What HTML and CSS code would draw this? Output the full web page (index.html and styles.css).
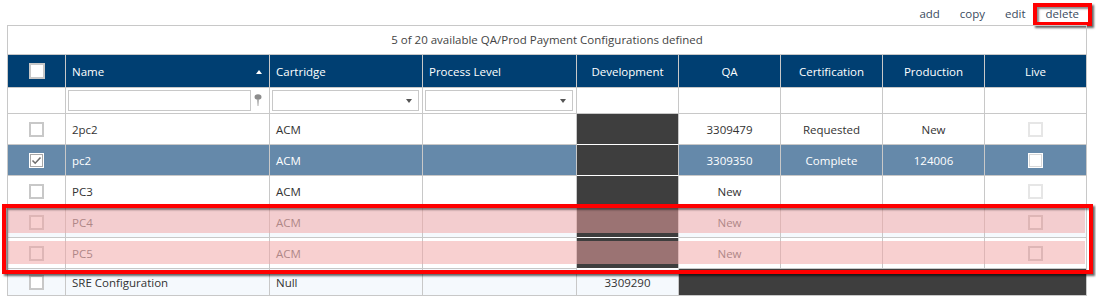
FILE: index.html
```html
<!DOCTYPE html>
<html lang="en">
<head>
    <meta charset="UTF-8">
    <title>Payment Configurations</title>
    <link rel="stylesheet" href="styles.css">
</head>
<body>
    <!-- Toolbar -->
    <div class="toolbar">
        <a class="tool">add</a>
        <a class="tool">copy</a>
        <a class="tool">edit</a>
        <a class="tool tool-marked">delete</a>
    </div>

    <!-- Grid -->
    <div class="grid">
        <div class="grid-title">5 of 20 available QA/Prod Payment Configurations defined</div>
        <table class="grid-table">
            <colgroup>
                <col style="width:58px">
                <col style="width:204px">
                <col style="width:153px">
                <col style="width:154px">
                <col style="width:102px">
                <col style="width:102px">
                <col style="width:102px">
                <col style="width:102px">
                <col style="width:102px">
            </colgroup>
            <thead>
                <tr class="head-row">
                    <th class="center"><span class="cb cb-head"></span></th>
                    <th>Name<span class="sort"></span></th>
                    <th>Cartridge</th>
                    <th>Process Level</th>
                    <th class="center">Development</th>
                    <th class="center">QA</th>
                    <th class="center">Certification</th>
                    <th class="center">Production</th>
                    <th class="center">Live</th>
                </tr>
                <tr class="filter-row">
                    <td></td>
                    <td class="filter-cell">
                        <div class="filter-input"></div>
                        <svg class="pin" width="8" height="13" viewBox="0 0 8 13">
                            <ellipse cx="4" cy="3" rx="3.5" ry="2.8" fill="#8c8c8c"/>
                            <path d="M3.3 5.5 H4.7 L4.3 12 H3.7 Z" fill="#8c8c8c"/>
                        </svg>
                    </td>
                    <td class="filter-cell"><div class="filter-select"></div></td>
                    <td class="filter-cell"><div class="filter-select"></div></td>
                    <td></td><td></td><td></td><td></td><td></td>
                </tr>
            </thead>
            <tbody>
                <tr class="row">
                    <td class="center"><span class="cb"></span></td>
                    <td>2pc2</td>
                    <td>ACM</td>
                    <td></td>
                    <td class="dev"></td>
                    <td class="center">3309479</td>
                    <td class="center">Requested</td>
                    <td class="center">New</td>
                    <td class="center"><span class="cb cb-live"></span></td>
                </tr>
                <tr class="row row-selected">
                    <td class="center"><span class="cb cb-checked">
                        <svg width="11" height="9" viewBox="0 0 11 9"><path d="M1.5 4.5 L4.2 7.2 L9.5 1.5" fill="none" stroke="#6e6e6e" stroke-width="1.6"/></svg>
                    </span></td>
                    <td>pc2</td>
                    <td>ACM</td>
                    <td></td>
                    <td class="dev"></td>
                    <td class="center">3309350</td>
                    <td class="center">Complete</td>
                    <td class="center">124006</td>
                    <td class="center"><span class="cb cb-live-on"></span></td>
                </tr>
                <tr class="row">
                    <td class="center"><span class="cb"></span></td>
                    <td>PC3</td>
                    <td>ACM</td>
                    <td></td>
                    <td class="dev"></td>
                    <td class="center">New</td>
                    <td></td>
                    <td></td>
                    <td class="center"><span class="cb cb-live"></span></td>
                </tr>
                <tr class="row row-alt row-flagged">
                    <td class="center"><span class="cb"></span></td>
                    <td>PC4</td>
                    <td>ACM</td>
                    <td></td>
                    <td class="dev"></td>
                    <td class="center">New</td>
                    <td></td>
                    <td></td>
                    <td class="center"><span class="cb cb-live"></span></td>
                </tr>
                <tr class="row row-flagged">
                    <td class="center"><span class="cb"></span></td>
                    <td>PC5</td>
                    <td>ACM</td>
                    <td></td>
                    <td class="dev"></td>
                    <td class="center">New</td>
                    <td></td>
                    <td></td>
                    <td class="center"><span class="cb cb-live"></span></td>
                </tr>
                <tr class="row row-alt row-last">
                    <td class="center"><span class="cb"></span></td>
                    <td>SRE Configuration</td>
                    <td>Null</td>
                    <td></td>
                    <td class="center">3309290</td>
                    <td class="hidden-block" colspan="4"></td>
                </tr>
            </tbody>
        </table>

        <!-- annotation overlays -->
        <div class="mark mark-first"></div>
        <div class="mark mark-second"></div>
        <div class="frame"></div>
    </div>
</body>
</html>
```

FILE: styles.css
```css
body {
    margin: 0;
    font-family: "Open Sans", "Noto Sans", sans-serif;
    font-size: 11.5px;
    color: #333;
    background: #fff;
}

.toolbar {
    box-sizing: border-box;
    height: 25px;
    padding: 6px 7px 0 0;
    display: flex;
    justify-content: flex-end;
    align-items: flex-start;
}

.tool {
    display: block;
    padding: 0 10px;
    line-height: 16px;
    color: #3a4b5e;
    cursor: pointer;
}

.tool-marked {
    position: relative;
}

.tool-marked::after {
    content: "";
    position: absolute;
    left: -3px;
    right: -3px;
    top: -3px;
    bottom: -4px;
    border: 4px solid #f00;
    box-shadow: 2px 2px 2px rgba(0, 0, 0, 0.6), inset 2px 2px 2px rgba(0, 0, 0, 0.45);
}

.grid {
    position: relative;
    margin-left: 7px;
    width: 1080px;
}

.grid-title {
    box-sizing: border-box;
    height: 30px;
    border: 1px solid #c8c8c8;
    text-align: center;
    line-height: 28px;
    color: #444;
}

.grid-table {
    width: 1080px;
    table-layout: fixed;
    border-collapse: separate;
    border-spacing: 0;
    border-left: 1px solid #c8c8c8;
}

.grid-table th,
.grid-table td {
    padding: 0 6px;
    border-right: 1px solid #c8c8c8;
    border-bottom: 1px solid #c8c8c8;
    text-align: left;
    vertical-align: middle;
    white-space: nowrap;
    overflow: hidden;
}

.grid-table .center {
    text-align: center;
}

.head-row {
    height: 33px;
}

.head-row th {
    background-color: #003f72;
    color: #fff;
    font-weight: normal;
}

.sort {
    float: right;
    margin: 6px 1px 0 0;
    width: 0;
    height: 0;
    border-left: 3px solid transparent;
    border-right: 3px solid transparent;
    border-bottom: 4px solid #fff;
}

.filter-row {
    height: 26px;
}

.grid-table .filter-cell {
    padding: 0 3px 0 2px;
}

.filter-cell {
    position: relative;
}

.filter-input,
.filter-select {
    box-sizing: border-box;
    height: 21px;
    border: 1px solid #c8c8c8;
    background: #fff;
}

.filter-input {
    width: 183px;
}

.pin {
    position: absolute;
    right: 7px;
    top: 6px;
}

.filter-select {
    position: relative;
}

.filter-select::after {
    content: "";
    position: absolute;
    right: 6px;
    top: 8px;
    border-left: 3.5px solid transparent;
    border-right: 3.5px solid transparent;
    border-top: 4px solid #555;
}

.row {
    height: 31px;
}

.row-alt td {
    background-color: #f5f9fd;
}

.row-selected td {
    background-color: #6589aa;
    color: #fff;
}

.row-flagged td {
    color: #666;
}

.row-last {
    height: 27px;
}

.grid-table td.dev {
    background-color: #3e3e3e;
    border-bottom-color: #fff;
}

.grid-table td.hidden-block {
    background-color: #3e3e3e;
}

.cb {
    display: inline-block;
    box-sizing: border-box;
    width: 15px;
    height: 15px;
    border: 2px solid #c8c8c8;
    background: #fff;
    vertical-align: middle;
}

.cb-head {
    width: 16px;
    height: 16px;
}

.cb-checked {
    border: 1px solid #fff;
    box-shadow: inset 0 0 0 1px #a8a8a8;
    position: relative;
}

.cb-checked svg {
    position: absolute;
    left: 1px;
    top: 2px;
}

.cb-live {
    border-color: #e6e6e6;
}

.cb-live-on {
    border: 1px solid #fff;
    box-shadow: inset 0 0 0 1px #d8d8d8;
}

.row-flagged .cb {
    border-color: #c8c8c8;
}

/* annotation: pink highlight + red frame */
.mark {
    position: absolute;
    left: 1px;
    width: 1077px;
    background-color: rgba(242, 165, 165, 0.52);
}

.mark-first {
    top: 183px;
    height: 25px;
}

.mark-second {
    top: 216px;
    height: 23px;
}

.frame {
    position: absolute;
    box-sizing: border-box;
    left: -5px;
    top: 179px;
    width: 1091px;
    height: 70px;
    border: 4px solid #f00;
    box-shadow: 2px 2px 2px rgba(0, 0, 0, 0.6), inset 2px 2px 2px rgba(0, 0, 0, 0.45);
}
```
